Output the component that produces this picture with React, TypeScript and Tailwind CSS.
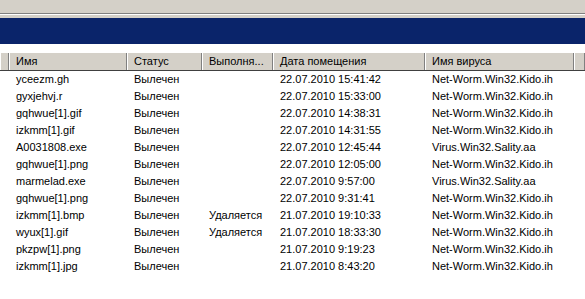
import React from "react";

const rows = [
  ["yceezm.gh", "Вылечен", "", "22.07.2010 15:41:42", "Net-Worm.Win32.Kido.ih"],
  ["gyxjehvj.r", "Вылечен", "", "22.07.2010 15:33:00", "Net-Worm.Win32.Kido.ih"],
  ["gqhwue[1].gif", "Вылечен", "", "22.07.2010 14:38:31", "Net-Worm.Win32.Kido.ih"],
  ["izkmm[1].gif", "Вылечен", "", "22.07.2010 14:31:55", "Net-Worm.Win32.Kido.ih"],
  ["A0031808.exe", "Вылечен", "", "22.07.2010 12:45:44", "Virus.Win32.Sality.aa"],
  ["gqhwue[1].png", "Вылечен", "", "22.07.2010 12:05:00", "Net-Worm.Win32.Kido.ih"],
  ["marmelad.exe", "Вылечен", "", "22.07.2010 9:57:00", "Virus.Win32.Sality.aa"],
  ["gqhwue[1].png", "Вылечен", "", "22.07.2010 9:31:41", "Net-Worm.Win32.Kido.ih"],
  ["izkmm[1].bmp", "Вылечен", "Удаляется", "21.07.2010 19:10:33", "Net-Worm.Win32.Kido.ih"],
  ["wyux[1].gif", "Вылечен", "Удаляется", "21.07.2010 18:33:30", "Net-Worm.Win32.Kido.ih"],
  ["pkzpw[1].png", "Вылечен", "", "21.07.2010 9:19:23", "Net-Worm.Win32.Kido.ih"],
  ["izkmm[1].jpg", "Вылечен", "", "21.07.2010 8:43:20", "Net-Worm.Win32.Kido.ih"],
];

const cols = "grid grid-cols-[9px_118px_75px_71px_152px_149px_1fr]";

const HeadCell = ({ label }: { label: string }) => (
  <div className="h-[17px] flex items-center pl-[6px] border-l border-l-white border-r border-r-[#808080] whitespace-nowrap overflow-hidden">
    {label}
  </div>
);

export default function App() {
  return (
    <div
      className="w-[585px] h-[299px] bg-white overflow-hidden text-[11px] text-black"
      style={{ fontFamily: '"Liberation Sans", Arial, sans-serif' }}
    >
      <div className="h-[13px] bg-[#d4d0c8]" />
      <div className="h-px bg-[#808080]" />
      <div className="h-px bg-white" />
      <div className="h-[3px] bg-[#d4d0c8]" />
      <div className="h-[26px] bg-[#0a246a]" />
      <div className="h-[9px] bg-white" />

      <div className={`${cols} bg-[#d4d0c8] border-b border-b-[#404040]`}>
        <HeadCell label="" />
        <HeadCell label="Имя" />
        <HeadCell label="Статус" />
        <HeadCell label="Выполня..." />
        <HeadCell label="Дата помещения" />
        <HeadCell label="Имя вируса" />
        <HeadCell label="" />
      </div>

      <div>
        {rows.map((r, i) => (
          <div key={i} className={`${cols} h-[17px] items-center`}>
            <div />
            {r.map((c, j) => (
              <div key={j} className="pl-[7px] whitespace-nowrap overflow-hidden">
                {c}
              </div>
            ))}
            <div />
          </div>
        ))}
      </div>
    </div>
  );
}
